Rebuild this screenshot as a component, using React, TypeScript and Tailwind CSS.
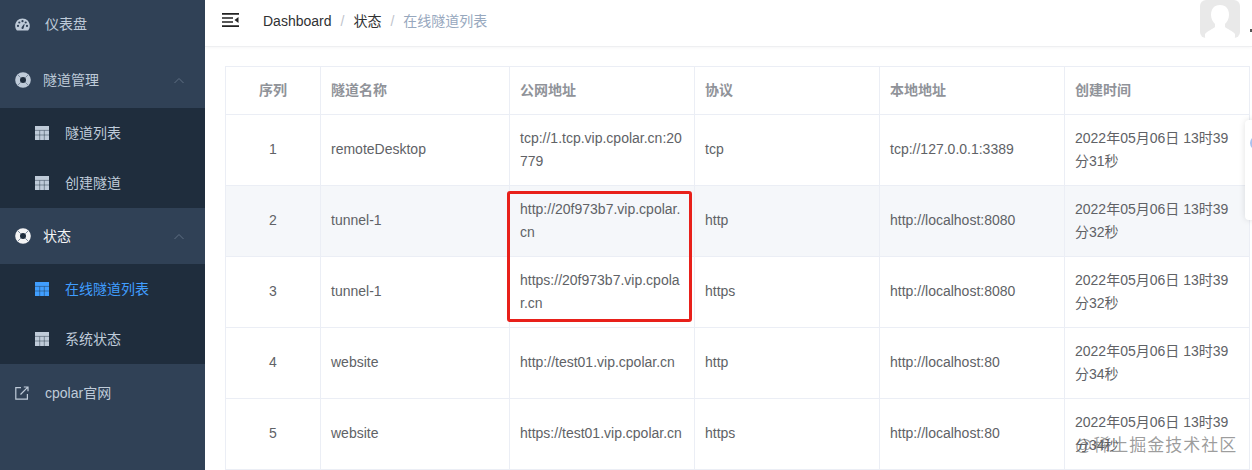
import React from "react";

const font = { fontFamily: '"Liberation Sans", "Noto Sans CJK SC", sans-serif' };

const GaugeIcon = () => (
  <svg width="15" height="13" viewBox="0 0 15 13" className="shrink-0">
    <path
      fill="currentColor"
      fillRule="evenodd"
      d="M7.5 0.5C3.4 0.5 0.2 3.7 0.2 7.8c0 1.7.5 3.2 1.5 4.4.2.2.4.3.6.3h10.4c.2 0 .4-.1.6-.3 1-1.200 1.500-2.700 1.500-4.400C14.800 3.700 11.600.5 7.500.5zM3 9a1.100 1.100 0 1 1 0-2.200A1.100 1.100 0 0 1 3 9zm1.300-3.400a1.100 1.100 0 1 1 0-2.200 1.100 1.100 0 0 1 0 2.200zm3.200-1.300a1.100 1.100 0 1 1 0-2.200 1.100 1.100 0 0 1 0 2.200zm1 6.300c-.4.500-1.100.6-1.600.2-.5-.4-.6-1.100-.2-1.600.3-.4 2.500-3.600 2.800-3.400.3.200-.7 4.300-1 4.800zM10.700 5.600a1.100 1.100 0 1 1 0-2.200 1.100 1.100 0 0 1 0 2.200zM12 9a1.100 1.100 0 1 1 0-2.200A1.100 1.100 0 0 1 12 9z"
    />
  </svg>
);

// life ring: light band, dark hole, four seams
const RingIcon = () => (
  <svg width="16" height="16" viewBox="0 0 16 16" className="shrink-0">
    <circle cx="8" cy="8" r="7.8" fill="currentColor" />
    <circle cx="8" cy="8" r="3" fill="#1f2d3d" />
    <path d="M2.500 2.500l3.300 3.300M13.500 2.500l-3.300 3.300M2.500 13.500l3.300-3.300M13.500 13.500l-3.300-3.300" stroke="#7d8c9f" strokeWidth="1" />
  </svg>
);

const TableIcon = () => (
  <svg width="14" height="14" viewBox="0 0 14 14" className="shrink-0">
    <path fill="currentColor" d="M0 0h14v14H0z" />
    <path stroke="#1f2d3d" strokeOpacity="0.55" strokeWidth="0.8" d="M4.700 4.500V14M9.300 4.500V14M0 4.400h14M0 9h14" />
  </svg>
);

const LinkIcon = () => (
  <svg width="14" height="14" viewBox="0 0 14 14" fill="none" stroke="currentColor" strokeWidth="1.200" className="shrink-0">
    <path d="M6 1.600H.8v11.600h11.600V8" />
    <path d="M5.500 8.500L12.800 1.200M8.800 1H13v4.200" />
  </svg>
);

const Chevron = () => (
  <svg width="12" height="7" viewBox="0 0 12 7" fill="none" stroke="#5f6f83" strokeWidth="1" className="ml-auto mr-[20px]">
    <path d="M1.500 6L6 1.500 10.500 6" />
  </svg>
);

const MenuIcon = () => (
  <svg width="17" height="14" viewBox="0 0 17 14" fill="#222" className="-translate-y-[3px]">
    <path d="M0 0h17v1.700H0zM0 12.300h17V14H0zM0 4.200h11v1.500H0zM0 8.300h11v1.500H0zM16.500 4v6L12.500 7z" />
  </svg>
);

const SubItem = ({ label, active }: { label: string; active?: boolean }) => (
  <div
    className={`flex h-[50px] items-center gap-[16px] pl-[35px] text-[14px] ${
      active ? "text-[#409eff]" : "text-[#bfcbd9]"
    }`}
  >
    <TableIcon />
    <span>{label}</span>
  </div>
);

const rows = [
  ["1", "remoteDesktop", "tcp://1.tcp.vip.cpolar.cn:20779", "tcp", "tcp://127.0.0.1:3389", "2022年05月06日 13时39分31秒"],
  ["2", "tunnel-1", "http://20f973b7.vip.cpolar.cn", "http", "http://localhost:8080", "2022年05月06日 13时39分32秒"],
  ["3", "tunnel-1", "https://20f973b7.vip.cpolar.cn", "https", "http://localhost:8080", "2022年05月06日 13时39分32秒"],
  ["4", "website", "http://test01.vip.cpolar.cn", "http", "http://localhost:80", "2022年05月06日 13时39分34秒"],
  ["5", "website", "https://test01.vip.cpolar.cn", "https", "http://localhost:80", "2022年05月06日 13时39分34秒"],
];

const headers = ["序列", "隧道名称", "公网地址", "协议", "本地地址", "创建时间"];

export default function App() {
  return (
    <div style={font} className="relative flex h-[470px] w-[1252px] overflow-hidden bg-white text-[14px]">
      {/* sidebar */}
      <aside className="w-[205px] shrink-0 bg-[#304156]">
        <div className="-mt-1">
          <div className="flex h-[56px] items-center gap-[15px] pl-[15px] text-[#bfcbd9]">
            <GaugeIcon />
            <span>仪表盘</span>
          </div>
          <div className="flex h-[56px] items-center gap-[12px] pl-[15px] text-[#bfcbd9]">
            <RingIcon />
            <span>隧道管理</span>
            <Chevron />
          </div>
          <div className="bg-[#1f2d3d]">
            <SubItem label="隧道列表" />
            <SubItem label="创建隧道" />
          </div>
          <div className="flex h-[56px] items-center gap-[12px] pl-[15px] text-[#f4f4f5]">
            <RingIcon />
            <span>状态</span>
            <Chevron />
          </div>
          <div className="bg-[#1f2d3d]">
            <SubItem label="在线隧道列表" active />
            <SubItem label="系统状态" />
          </div>
          <div className="flex h-[58px] items-center gap-[16px] pl-[15px] text-[#bfcbd9]">
            <LinkIcon />
            <span>cpolar官网</span>
          </div>
        </div>
      </aside>

      {/* main */}
      <main className="min-w-0 flex-1">
        <header className="flex h-[47px] items-center border-b border-[#eeeff1] pl-[17px] shadow-[0_1px_3px_rgba(0,21,41,0.04)]">
          <MenuIcon />
          <nav className="ml-[24px] flex -translate-y-[2px] items-center text-[14px] text-[#303133]">
            <span>Dashboard</span>
            <span className="mx-[9px] text-[#c0c4cc]">/</span>
            <span>状态</span>
            <span className="mx-[9px] text-[#c0c4cc]">/</span>
            <span className="text-[#97a8be]">在线隧道列表</span>
          </nav>
          <div className="ml-auto mr-[12px] flex h-[38px] w-[40px] -translate-y-[4px] items-end justify-center overflow-hidden rounded-[6px] bg-[#e9e9e9]">
            <svg width="30" height="34" viewBox="0 0 30 34" fill="#fff">
              <path d="M15 1c6 0 9 4 9 10 0 4-2 7-4 9v3c2 2 8 4 10 7v4H0v-4c2-3 8-5 10-7v-3c-2-2-4-5-4-9C6 5 9 1 15 1z" />
            </svg>
          </div>
        </header>

        <div className="pl-[20px] pt-[19px]">
          <table className="w-[1025px] table-fixed border-separate border-spacing-0 border-l border-t border-[#ebeef5] text-[14px] leading-[23px] text-[#606266]">
            <colgroup>
              <col className="w-[95px]" />
              <col className="w-[189px]" />
              <col className="w-[185px]" />
              <col className="w-[185px]" />
              <col className="w-[185px]" />
              <col className="w-[185px]" />
            </colgroup>
            <thead>
              <tr className="h-[48px]">
                {headers.map((h, i) => (
                  <th
                    key={h}
                    className={`border-b border-r border-[#ebeef5] px-[10px] font-bold text-[#909399] ${
                      i === 0 ? "text-center" : "text-left"
                    }`}
                  >
                    {h}
                  </th>
                ))}
              </tr>
            </thead>
            <tbody>
              {rows.map((row, r) => (
                <tr key={row[0]} className={`h-[71px] ${r === 1 ? "bg-[#f5f7fa]" : ""}`}>
                  {row.map((cell, i) => (
                    <td
                      key={i}
                      className={`break-all border-b border-r border-[#ebeef5] px-[10px] ${
                        i === 0 ? "text-center" : "text-left"
                      } ${i !== 5 && cell.length <= 28 ? "pb-[2px]" : ""}`}
                    >
                      {cell}
                    </td>
                  ))}
                </tr>
              ))}
            </tbody>
          </table>
        </div>
      </main>

      {/* red highlight drawn over the screenshot */}
      <div className="absolute left-[507px] top-[191px] h-[131px] w-[185px] rounded-[3px] border-[3px] border-[#e8201a]" />

      {/* floating panel at the right edge */}
      <div className="absolute left-[1245px] top-[120px] h-[100px] w-[20px] rounded-l-[4px] bg-white shadow-[0_0_6px_rgba(0,0,0,0.12)]">
        <div className="ml-[5px] mt-[16px] h-[14px] w-[14px] rounded-full bg-[#a9c1ee]" />
      </div>

      {/* caret cut off by the window edge */}
      <div className="absolute left-[1250px] top-[29px] h-[3px] w-[2px] bg-[#555]" />

      {/* watermark */}
      <div className="absolute left-[1075px] top-[434px] text-[17px] leading-[24px] tracking-[1px] text-[rgba(90,90,90,0.6)]">
        @稀土掘金技术社区
      </div>
    </div>
  );
}
